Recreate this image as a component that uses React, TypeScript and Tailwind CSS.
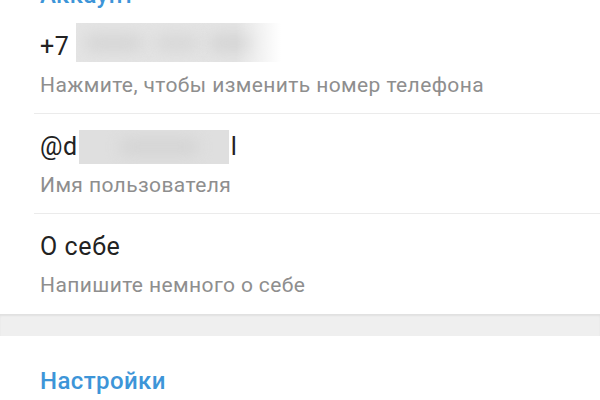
import React from "react";

function Row({
  title,
  subtitle,
  last,
}: {
  title: React.ReactNode;
  subtitle: string;
  last?: boolean;
}) {
  return (
    <div
      className={
        "ml-[34px] pl-[6px] pt-[19px] " +
        (last ? "pb-[17px]" : "pb-[16px] border-b border-[#ebebeb]")
      }
    >
      <div className="flex items-start text-[25px] leading-[28px] tracking-[0.6px] text-[#222222]">{title}</div>
      <div className="mt-[12px] text-[21px] leading-[24px] tracking-[0.4px] text-[#8e8e8e]">{subtitle}</div>
    </div>
  );
}

export default function App() {
  return (
    <div
      className="w-[600px] h-[400px] overflow-hidden bg-white"
      style={{ fontFamily: "Roboto, 'Noto Sans', sans-serif" }}
    >
      <div className="flex flex-col h-[14px] pl-[40px]">
        <div className="-mt-[19px] text-[24px] leading-[28px] tracking-[0.4px] font-medium text-[#3d95d8]">Аккаунт</div>
      </div>

      <Row
        title={
          <>
            <span>+7</span>
            <span className="relative ml-[7px] -mt-[10px] -mb-[1px] h-[39px] w-[205px] overflow-hidden bg-[#e4e4e4]">
              <span className="absolute left-[8px] top-[10px] h-[20px] w-[60px] rounded-full bg-[#d7d7d7] blur-[7px]" />
              <span className="absolute left-[78px] top-[10px] h-[20px] w-[45px] rounded-full bg-[#d9d9d9] blur-[7px]" />
              <span className="absolute left-[132px] top-[10px] h-[20px] w-[50px] rounded-full bg-[#d6d6d6] blur-[7px]" />
              <span className="absolute right-0 top-0 h-full w-[45px] bg-gradient-to-r from-transparent to-white" />
            </span>
          </>
        }
        subtitle="Нажмите, чтобы изменить номер телефона"
      />
      <Row
        title={
          <>
            <span>@d</span>
            <span className="relative ml-[1px] -mt-[3px] -mb-[3px] h-[34px] w-[150px] overflow-hidden bg-[#dfdfdf]">
              <span className="absolute left-[40px] top-[8px] h-[18px] w-[80px] rounded-full bg-[#d5d5d5] blur-[7px]" />
            </span>
            <span className="ml-[2px]">l</span>
          </>
        }
        subtitle="Имя пользователя"
      />
      <Row title={<span>О себе</span>} subtitle="Напишите немного о себе" last />

      <div className="h-[22px] bg-[#efefef] shadow-[inset_0_2px_2px_rgba(0,0,0,0.06)]" />

      <div className="pl-[40px] pt-[31px] text-[24px] leading-[28px] tracking-[0.4px] font-medium text-[#3d95d8]">Настройки</div>
    </div>
  );
}
